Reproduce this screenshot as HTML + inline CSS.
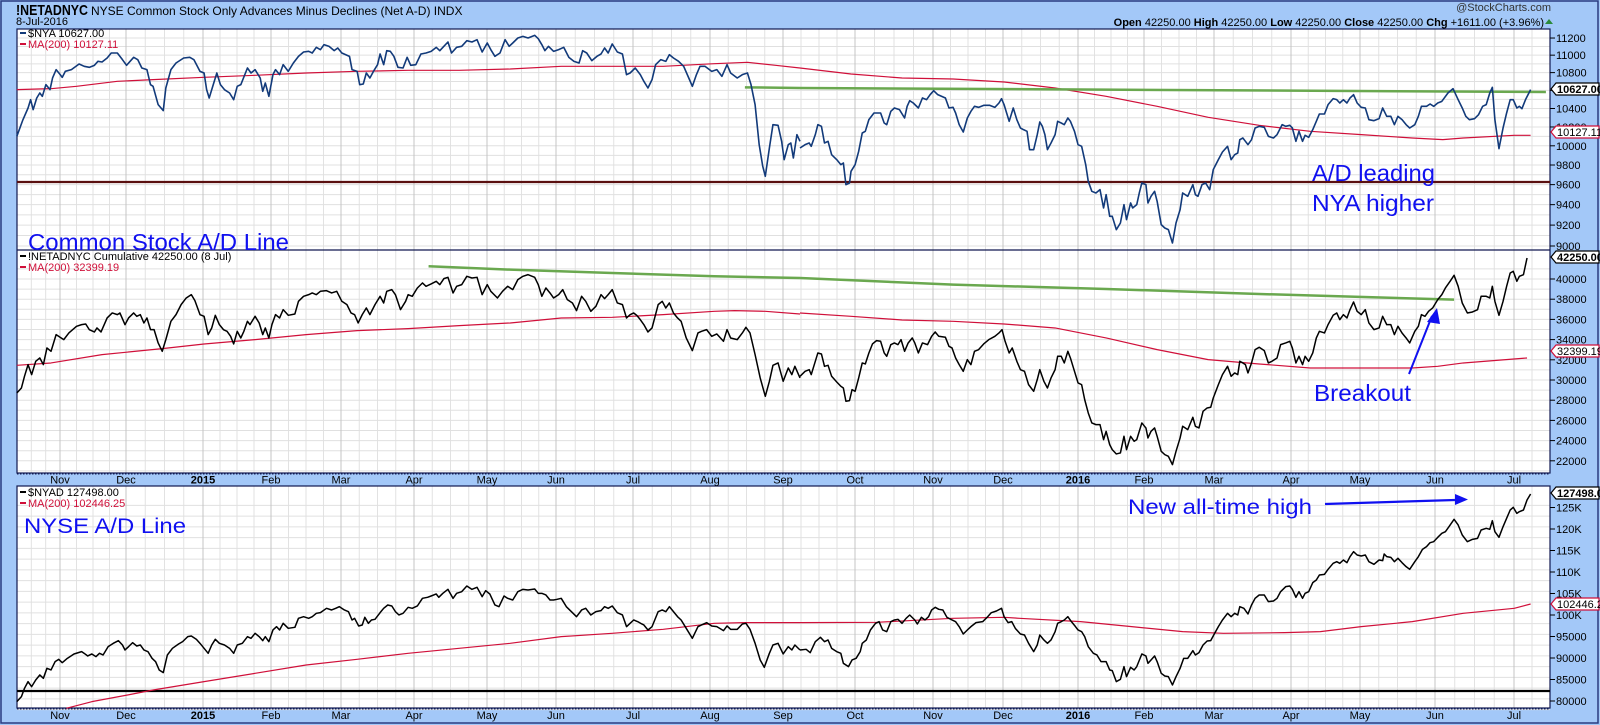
<!DOCTYPE html>
<html><head><meta charset="utf-8">
<style>
html,body{margin:0;padding:0;background:#a3c8f8;}
body{width:1600px;height:725px;overflow:hidden;font-family:"Liberation Sans",sans-serif;}
svg{display:block}
</style></head>
<body>
<svg id="s" width="1600" height="725" xmlns="http://www.w3.org/2000/svg" font-family="Liberation Sans, sans-serif">
<rect x="0" y="0" width="1600" height="725" fill="#a3c8f8"/>
<rect x="1" y="1" width="1597" height="722" fill="none" stroke="#2a3a80" stroke-width="1.5"/>
<rect x="17" y="29" width="1533" height="444" fill="#fff"/>
<rect x="17" y="486" width="1533" height="222" fill="#fff"/>
<g id="grid"></g>
<rect x="17" y="29" width="1533" height="444" fill="none" stroke="#101850" stroke-width="1.2"/>
<line x1="17" y1="250" x2="1550" y2="250" stroke="#101850" stroke-width="1.2"/>
<rect x="17" y="486" width="1533" height="222" fill="none" stroke="#101850" stroke-width="1.2"/>
<g id="ticks"></g>

<text x="16" y="15" font-size="15" font-weight="bold" fill="#000" textLength="72" lengthAdjust="spacingAndGlyphs">!NETADNYC</text>
<text x="91" y="15" font-size="12" fill="#000">NYSE Common Stock Only Advances Minus Declines (Net A-D)  INDX</text>
<text x="16" y="25" font-size="11" fill="#000">8-Jul-2016</text>
<text x="1551" y="11" font-size="11" fill="#333" text-anchor="end">@StockCharts.com</text>
<text x="1544" y="26" font-size="11" fill="#000" text-anchor="end"><tspan font-weight="bold">Open</tspan> 42250.00  <tspan font-weight="bold">High</tspan> 42250.00  <tspan font-weight="bold">Low</tspan> 42250.00  <tspan font-weight="bold">Close</tspan> 42250.00  <tspan font-weight="bold">Chg</tspan> +1611.00 (+3.96%)</text>
<polygon points="1545,24 1553,24 1549,19" fill="#2a8a3a"/>

<g font-size="11">
<rect x="20" y="32" width="6" height="2" fill="#123a7a"/><text x="28" y="37" fill="#000">$NYA 10627.00</text>
<rect x="20" y="43" width="6" height="2" fill="#d0103a"/><text x="28" y="48" fill="#d0103a">MA(200) 10127.11</text>
<rect x="20" y="255" width="6" height="2" fill="#000"/><text x="28" y="260" fill="#000">!NETADNYC Cumulative 42250.00 (8 Jul)</text>
<rect x="20" y="266" width="6" height="2" fill="#d0103a"/><text x="28" y="271" fill="#d0103a">MA(200) 32399.19</text>
<rect x="20" y="491" width="6" height="2" fill="#000"/><text x="28" y="496" fill="#000">$NYAD 127498.00</text>
<rect x="20" y="502" width="6" height="2" fill="#d0103a"/><text x="28" y="507" fill="#d0103a">MA(200) 102446.25</text>
</g>

<line x1="17" y1="182" x2="1550" y2="182" stroke="#5a1010" stroke-width="2.2"/>
<line x1="17" y1="691" x2="1550" y2="691" stroke="#000" stroke-width="2.2"/>

<g transform="translate(0,28) scale(0.5102,0.3333)" fill="none" stroke-linejoin="round">
<polyline vector-effect="non-scaling-stroke" stroke="#d0103a" stroke-width="1.2" points="33,185 100,182 150,175 230,160 300,155 400,148 500,142 600,135 700,130 800,127 900,127 1000,123 1100,115 1200,115 1300,115 1400,107 1465,103 1520,112 1568,120"/>
<polyline vector-effect="non-scaling-stroke" stroke="#6aa84f" stroke-width="2.5" points="1460,178 1568,180"/>
<polyline vector-effect="non-scaling-stroke" stroke="#123a7a" stroke-width="1.6" points="33,325 45,275 55,240 60,215 65,245 72,210 78,195 83,205 90,170 98,185 103,150 110,125 118,140 122,148 128,130 140,125 155,108 165,115 175,118 185,112 192,100 200,102 210,90 218,75 230,75 240,95 248,112 255,100 262,88 270,95 278,120 288,125 295,170 300,175 310,230 320,248 325,180 335,125 345,105 360,90 372,88 380,95 392,130 400,135 405,185 410,210 418,170 425,135 432,170 440,185 450,195 458,215 465,175 472,170 485,120 492,135 500,125 510,150 515,190 520,165 527,205 535,140 540,125 548,140 555,110 565,130 575,105 585,85 595,72 605,70 612,75 620,58 628,65 635,50 645,55 655,68 662,60 670,75 685,85 690,125 700,130 705,170 712,168 718,135 725,150 732,130 740,110 745,78 752,110 758,68 765,70 772,85 780,118 790,120 798,88 805,112 815,110 825,78 835,75 845,70 855,58 862,68 870,55 878,42 885,75 895,58 905,55 915,38 925,42 935,35 945,72 955,45 962,65 970,85 980,75 990,35 998,55 1005,45 1015,30 1025,25 1035,30 1048,22 1055,32 1062,50 1068,68 1075,55 1085,70 1095,65 1105,58 1115,88 1125,100 1135,105 1142,68 1150,75 1160,98 1170,85 1178,78 1185,60 1192,75 1200,48 1210,72 1220,78 1228,140 1235,135 1245,120 1255,140 1262,160 1270,180 1278,155 1285,110 1295,95 1305,100 1312,80 1320,90 1330,100 1340,115 1350,150 1357,175 1365,140 1372,115 1382,115 1395,130 1405,125 1415,145 1425,110 1432,135 1445,150 1455,140 1465,135 1472,170 1480,230 1488,350 1495,415 1500,445 1508,360 1515,290 1525,292 1532,340 1537,395 1545,350 1550,345 1555,390 1562,320 1568,340"/>
<polyline vector-effect="non-scaling-stroke" stroke="#d0103a" stroke-width="1.2" points="33,1012 100,1005 200,980 318,962 400,948 500,935 600,920 700,908 800,902 900,893 1000,885 1100,870 1200,868 1300,860 1400,850 1440,848 1500,850 1568,858"/>
<polyline vector-effect="non-scaling-stroke" stroke="#6aa84f" stroke-width="2.5" points="840,715 1000,725 1200,735 1400,745 1568,750"/>
<polyline vector-effect="non-scaling-stroke" stroke="#000" stroke-width="1.5" points="33,1095 42,1080 48,1045 55,1010 62,1040 70,1000 78,990 85,1010 92,960 100,970 110,920 120,930 125,935 135,915 150,895 160,890 168,888 175,905 185,912 190,900 198,912 210,870 220,855 230,860 235,855 245,890 252,870 262,855 268,865 275,860 282,885 288,870 295,905 302,905 310,945 318,970 325,935 335,880 345,860 355,830 365,810 375,800 382,818 392,860 400,865 408,920 415,900 422,862 430,890 438,905 445,910 452,925 458,948 465,910 472,930 478,910 485,880 490,890 500,865 508,885 515,920 520,900 527,930 533,890 540,860 548,870 555,845 565,862 578,858 585,820 595,805 605,800 612,795 620,800 628,790 640,788 650,795 660,790 670,820 680,830 688,855 695,860 702,885 710,860 718,840 725,860 735,830 745,805 752,825 758,790 768,785 775,800 785,845 795,820 800,800 808,805 818,780 828,765 835,775 845,768 855,760 862,770 870,752 878,748 888,795 895,775 905,770 915,745 925,750 935,748 945,800 955,770 962,790 975,810 985,790 995,775 1005,785 1015,755 1025,745 1035,740 1048,748 1055,770 1062,805 1070,780 1078,795 1085,810 1095,800 1103,785 1112,815 1122,825 1130,848 1140,805 1148,820 1158,850 1168,835 1178,800 1185,812 1192,800 1200,785 1210,825 1220,830 1228,870 1235,860 1242,855 1248,862 1255,875 1262,890 1270,912 1278,900 1290,830 1298,820 1305,840 1312,825 1320,855 1328,870 1335,880 1345,930 1357,968 1368,915 1375,910 1385,905 1395,925 1405,918 1418,940 1425,905 1432,930 1445,935 1455,915 1462,898 1470,915 1480,980 1490,1050 1500,1105 1508,1060 1515,1012 1525,1005 1535,1060 1545,1020 1552,1040 1558,1015 1568,1050"/>
</g>

<g transform="translate(800,28) scale(0.5102,0.3333)" fill="none" stroke-linejoin="round">
<polyline vector-effect="non-scaling-stroke" stroke="#d0103a" stroke-width="1.2" points="0,120 100,138 200,150 300,153 400,162 500,180 600,205 700,235 800,268 900,292 1000,310 1100,320 1200,330 1260,335 1300,330 1400,322 1432,322"/>
<polyline vector-effect="non-scaling-stroke" stroke="#6aa84f" stroke-width="2.5" points="0,180 1462,192"/>
<polyline vector-effect="non-scaling-stroke" stroke="#123a7a" stroke-width="1.6" points="0,360 10,350 18,345 22,355 30,320 35,290 42,295 48,345 55,340 62,380 72,395 80,410 85,405 90,470 97,465 100,430 108,410 115,370 122,315 128,310 135,275 145,255 158,255 165,285 170,290 178,250 185,240 195,245 205,270 210,235 215,218 222,225 232,240 240,210 248,215 255,200 262,188 270,200 285,210 292,240 300,238 305,255 312,290 320,312 328,270 335,250 342,235 350,238 360,232 372,232 382,238 390,225 395,212 400,230 405,255 410,280 418,240 425,275 432,300 438,305 445,310 450,365 458,365 465,320 470,282 475,295 480,320 485,365 492,345 500,320 505,280 512,285 518,290 525,270 530,280 538,310 545,350 552,355 560,410 565,460 572,490 580,495 588,485 595,540 600,500 607,565 612,565 620,605 628,585 635,530 640,575 648,525 652,540 660,530 665,495 670,465 678,470 682,525 688,505 695,490 700,520 708,590 715,600 722,605 730,645 737,585 745,545 750,495 760,505 770,470 775,500 780,505 788,470 795,465 803,485 810,425 820,395 828,372 838,355 845,395 852,380 858,375 862,335 868,330 873,340 878,350 885,335 892,300 900,295 910,298 918,325 928,330 935,320 945,290 952,295 960,292 965,300 972,340 978,310 985,340 990,322 997,328 1005,305 1012,280 1018,258 1028,258 1035,230 1045,212 1052,215 1058,225 1065,215 1072,225 1078,210 1085,200 1092,225 1100,238 1108,240 1115,275 1125,278 1135,272 1142,240 1150,265 1158,265 1165,290 1172,265 1180,275 1188,290 1195,300 1205,290 1212,265 1218,235 1228,235 1235,228 1242,235 1250,225 1258,220 1270,195 1280,182 1290,215 1298,240 1305,265 1312,275 1322,272 1330,260 1338,235 1345,230 1352,195 1357,178 1362,275 1370,362 1378,300 1385,255 1392,215 1398,215 1405,240 1410,235 1415,242 1422,215 1432,185"/>
<polyline vector-effect="non-scaling-stroke" stroke="#d0103a" stroke-width="1.2" points="0,855 100,865 200,876 300,880 400,888 500,900 600,930 700,965 800,995 900,1008 1000,1020 1100,1020 1200,1020 1250,1015 1300,1005 1425,990"/>
<polyline vector-effect="non-scaling-stroke" stroke="#6aa84f" stroke-width="2.5" points="0,750 300,770 600,783 900,798 1282,815"/>
<polyline vector-effect="non-scaling-stroke" stroke="#000" stroke-width="1.5" points="0,1045 10,1030 18,1025 22,1040 30,1000 35,975 42,978 48,1015 55,1012 62,1045 72,1062 80,1075 85,1080 90,1120 97,1118 102,1085 108,1090 115,1050 122,1005 128,1008 135,975 142,948 150,938 158,940 165,975 170,985 178,950 185,945 192,950 198,935 205,970 212,945 220,930 225,945 232,975 240,945 250,950 258,925 265,912 272,925 285,928 292,955 298,960 305,990 312,1010 320,1030 328,995 335,1010 342,970 350,965 360,948 370,935 382,925 390,915 396,905 402,940 410,975 416,960 425,1000 432,1025 440,1030 448,1070 458,1090 465,1055 470,1025 478,1060 485,1080 492,1050 500,1025 505,985 512,985 518,1005 525,970 530,990 538,1030 545,1065 552,1070 558,1115 565,1155 572,1185 580,1190 588,1190 595,1235 600,1210 607,1250 612,1265 620,1278 628,1275 635,1225 640,1265 648,1225 655,1240 660,1235 670,1185 678,1200 682,1230 688,1210 695,1200 700,1225 708,1270 715,1280 722,1285 730,1310 737,1270 745,1230 750,1195 760,1205 770,1168 775,1195 782,1200 790,1150 798,1140 805,1138 810,1110 820,1070 828,1040 838,1015 845,1045 852,1035 858,1040 862,1000 868,1005 873,1010 878,1035 885,1005 892,965 900,958 910,968 918,1005 925,1000 935,990 942,950 952,945 960,940 965,960 972,1005 978,985 985,1010 990,985 997,1000 1005,975 1012,930 1018,910 1028,915 1035,890 1045,862 1052,855 1058,875 1065,860 1072,870 1078,845 1085,822 1092,850 1100,860 1108,845 1115,885 1125,905 1135,900 1142,865 1150,890 1158,890 1165,920 1172,895 1180,915 1188,930 1195,945 1205,910 1212,895 1218,860 1225,865 1232,850 1240,840 1250,815 1258,800 1265,780 1275,758 1282,742 1290,775 1298,825 1308,855 1318,852 1328,845 1335,805 1345,805 1352,810 1357,775 1362,820 1370,862 1378,820 1385,775 1392,735 1398,730 1405,760 1410,745 1418,740 1425,690"/>
</g>

<g transform="translate(0,480) scale(0.5102,0.3333)" fill="none" stroke-linejoin="round">
<polyline vector-effect="non-scaling-stroke" stroke="#d0103a" stroke-width="1.2" points="130,685 180,665 250,645 300,630 400,605 500,580 600,555 700,538 800,520 900,505 1000,490 1100,470 1200,460 1300,448 1400,430 1460,428 1568,428"/>
<polyline vector-effect="non-scaling-stroke" stroke="#000" stroke-width="1.5" points="33,665 42,650 48,625 55,605 62,620 70,600 78,585 85,595 92,565 100,570 108,545 115,538 122,548 132,535 145,522 160,515 165,520 172,528 180,522 188,530 195,520 202,525 212,500 222,490 232,482 240,495 245,510 252,500 260,488 268,498 275,495 282,510 290,515 298,535 305,545 312,570 320,578 328,525 338,505 350,492 358,485 368,470 375,468 385,478 392,490 400,505 408,520 415,495 422,478 430,490 440,495 450,505 458,520 465,495 475,490 485,470 492,475 500,460 508,470 515,482 520,470 527,485 535,450 542,440 548,450 555,430 565,445 578,442 585,415 595,410 605,415 612,410 620,400 628,398 640,385 650,390 658,385 665,380 675,390 683,395 690,420 695,415 703,438 710,435 715,412 722,430 728,420 735,418 745,398 752,385 760,375 768,378 775,395 782,405 790,400 800,382 808,385 818,378 828,355 838,352 845,348 855,342 860,352 868,340 878,328 888,355 895,340 905,335 915,318 925,328 935,322 945,350 952,332 960,342 970,375 978,380 988,348 995,355 1005,360 1015,335 1025,328 1035,330 1048,327 1055,340 1062,340 1070,345 1078,360 1085,360 1092,358 1100,355 1110,380 1120,395 1130,410 1140,390 1148,385 1158,405 1168,395 1178,392 1185,380 1192,385 1200,378 1210,398 1220,405 1228,440 1235,430 1242,420 1250,425 1258,432 1262,435 1270,450 1278,440 1290,395 1298,390 1305,395 1312,380 1320,395 1328,410 1335,420 1345,445 1357,475 1368,440 1375,435 1385,428 1395,438 1405,440 1418,452 1425,438 1432,448 1445,448 1455,432 1462,430 1470,448 1480,490 1490,540 1498,562 1508,520 1515,495 1525,490 1535,522 1545,500 1552,510 1558,495 1568,510"/>
</g>
<g transform="translate(800,480) scale(0.5102,0.3333)" fill="none" stroke-linejoin="round">
<polyline vector-effect="non-scaling-stroke" stroke="#d0103a" stroke-width="1.2" points="0,428 150,427 300,415 400,412 430,415 550,425 650,440 750,455 830,460 950,458 1020,455 1100,440 1200,425 1300,400 1400,385 1432,372"/>
<polyline vector-effect="non-scaling-stroke" stroke="#000" stroke-width="1.5" points="0,510 12,508 20,518 30,485 40,472 48,485 55,480 62,505 72,515 80,520 85,550 95,560 102,540 110,535 118,515 122,490 130,480 138,450 148,430 155,425 162,450 170,455 178,425 185,420 192,418 200,430 208,415 215,405 225,420 230,432 238,412 245,420 252,410 258,390 265,382 272,388 280,390 288,412 298,420 305,425 312,440 320,462 328,450 335,440 345,428 358,425 368,410 375,398 385,393 395,385 400,410 408,428 415,425 422,445 432,462 440,465 448,490 458,515 465,495 470,465 478,480 485,490 492,480 500,455 505,430 512,425 518,420 525,410 532,425 540,440 545,450 552,455 558,470 565,500 575,520 582,525 590,545 600,545 607,570 612,572 620,605 628,598 635,560 640,590 648,562 655,570 660,560 670,522 678,528 682,550 688,540 695,528 700,545 708,580 715,588 722,590 730,615 737,590 745,565 752,535 760,535 770,512 775,525 782,518 790,495 798,483 805,482 812,462 820,440 828,420 838,400 845,410 852,400 858,405 862,380 870,385 878,402 885,375 892,355 900,345 910,345 918,365 928,363 935,355 942,335 952,320 960,318 965,328 972,352 978,335 985,355 990,340 997,335 1005,308 1012,300 1018,285 1028,283 1035,268 1045,250 1052,245 1058,250 1065,240 1072,248 1078,230 1085,215 1092,225 1100,228 1108,225 1115,245 1125,253 1135,240 1142,242 1145,222 1150,230 1158,232 1165,245 1172,235 1180,248 1188,260 1195,268 1205,245 1212,230 1220,208 1228,200 1235,188 1242,185 1250,172 1258,160 1265,155 1272,140 1282,118 1290,135 1298,165 1308,185 1318,178 1328,175 1335,150 1345,145 1352,148 1357,122 1362,155 1370,172 1378,140 1385,115 1392,90 1398,82 1405,100 1410,95 1418,90 1425,60 1432,42"/>
</g>

<g fill="#1010f0" font-family="Liberation Sans, sans-serif">
<text x="28" y="250" font-size="23" textLength="261" lengthAdjust="spacingAndGlyphs">Common Stock A/D Line</text>
<text x="1312" y="181" font-size="23" textLength="123" lengthAdjust="spacingAndGlyphs">A/D leading</text>
<text x="1312" y="211" font-size="23" textLength="122" lengthAdjust="spacingAndGlyphs">NYA higher</text>
<text x="1314" y="401" font-size="23" textLength="97" lengthAdjust="spacingAndGlyphs">Breakout</text>
<text x="24" y="533" font-size="21" textLength="162" lengthAdjust="spacingAndGlyphs">NYSE A/D Line</text>
<text x="1128" y="514" font-size="21" textLength="184" lengthAdjust="spacingAndGlyphs">New all-time high</text>
</g>
<line x1="1409" y1="374" x2="1432" y2="316" stroke="#1010f0" stroke-width="2"/>
<polygon points="1437,308 1427,322 1440,324" fill="#1010f0"/>
<line x1="1325" y1="504" x2="1455" y2="500" stroke="#1010f0" stroke-width="2.2"/>
<polygon points="1455,494 1468,499.5 1455,505" fill="#1010f0"/>

<g id="tags"></g>
</svg>
<script>
(function(){
var NS="http://www.w3.org/2000/svg";
function el(p,n,a,t){var e=document.createElementNS(NS,n);for(var k in a)e.setAttribute(k,a[k]);if(t!=null)e.textContent=t;p.appendChild(e);return e;}
var grid=document.getElementById('grid'),ticks=document.getElementById('ticks'),tags=document.getElementById('tags');
var months=[[17,""],[60,"Nov"],[126,"Dec"],[203,"2015"],[271,"Feb"],[341,"Mar"],[414,"Apr"],[487,"May"],[556,"Jun"],[633,"Jul"],[710,"Aug"],[783,"Sep"],[855,"Oct"],[933,"Nov"],[1003,"Dec"],[1078,"2016"],[1144,"Feb"],[1214,"Mar"],[1291,"Apr"],[1360,"May"],[1435,"Jun"],[1514,"Jul"],[1550,""]];
var panels=[[29,250],[250,473],[486,708]];
for(var i=0;i<months.length-1;i++){
  var a=months[i][0],b=months[i+1][0],n=(b-a>50)?4:Math.max(1,Math.round((b-a)/17));
  for(var j=1;j<n;j++){var x=a+(b-a)*j/n;
    panels.forEach(function(p){el(grid,'line',{x1:x,x2:x,y1:p[0],y2:p[1],stroke:'#e2e2e2','stroke-width':1});});}
}
var y1=function(v){return 246-Math.log(v/9000)*951;};
var y2=function(v){return 279+(40000-v)*0.0101;};
var y3=function(v){return 615+(100000-v)*0.0043;};
var h1=[],h2=[],h3=[];
for(var v=9000;v<=11200;v+=200)h1.push([v,y1(v),String(v)]);
for(var v=22000;v<=40000;v+=2000)h2.push([v,y2(v),String(v)]);
for(var v=80000;v<=125000;v+=5000)h3.push([v,y3(v),v>=100000?(v/1000)+"K":String(v)]);
function hl(f,step,lo,hi){for(var v=lo;v<=hi;v+=step){var y=f(v);el(grid,'line',{x1:17,x2:1550,y1:y,y2:y,stroke:'#e0e0e0','stroke-width':1});}}
hl(y1,100,9000,11250);hl(y2,1000,21000,41500);hl(y3,2500,78000,127500);
months.forEach(function(m){if(!m[1])return;panels.forEach(function(p){el(grid,'line',{x1:m[0],x2:m[0],y1:p[0],y2:p[1],stroke:'#c4c4c4','stroke-width':1});});});
function axis(arr){arr.forEach(function(a){if(a[1]<30||a[1]>707)return;el(ticks,'line',{x1:1550,x2:1555,y1:a[1],y2:a[1],stroke:'#000','stroke-width':1});el(ticks,'text',{x:1556,y:a[1]+4,'font-size':11,fill:'#000'},a[2]);});}
axis(h1);axis(h2);axis(h3);
function strip(y){for(var x=17;x<1550;x+=3)el(ticks,'rect',{x:x,y:y,width:1.5,height:1.5,fill:'#101850'});}
strip(473);strip(708);
months.forEach(function(m){if(!m[1])return;var b=(m[1]=="2015"||m[1]=="2016");
 el(ticks,'text',{x:m[0],y:483.5,'font-size':11,'text-anchor':'middle','font-weight':b?'bold':'normal',fill:'#000'},m[1]);
 el(ticks,'text',{x:m[0],y:719,'font-size':11,'text-anchor':'middle','font-weight':b?'bold':'normal',fill:'#000'},m[1]);});
function tag(y,txt,col,bold){
 el(tags,'polygon',{points:"1551,"+y+" 1556,"+(y-6)+" 1599,"+(y-6)+" 1599,"+(y+6)+" 1556,"+(y+6),fill:'#fff',stroke:col,'stroke-width':1.2});
 el(tags,'text',{x:1557,y:y+4,'font-size':11,'font-weight':bold?'bold':'normal',fill:'#000'},txt);}
tag(89,"10627.00","#000",true);
tag(132,"10127.11","#d0103a",false);
tag(257,"42250.00","#000",true);
tag(351,"32399.19","#d0103a",false);
tag(493,"127498.00","#000",true);
tag(604,"102446.25","#d0103a",false);
})();
</script>
</body></html>
